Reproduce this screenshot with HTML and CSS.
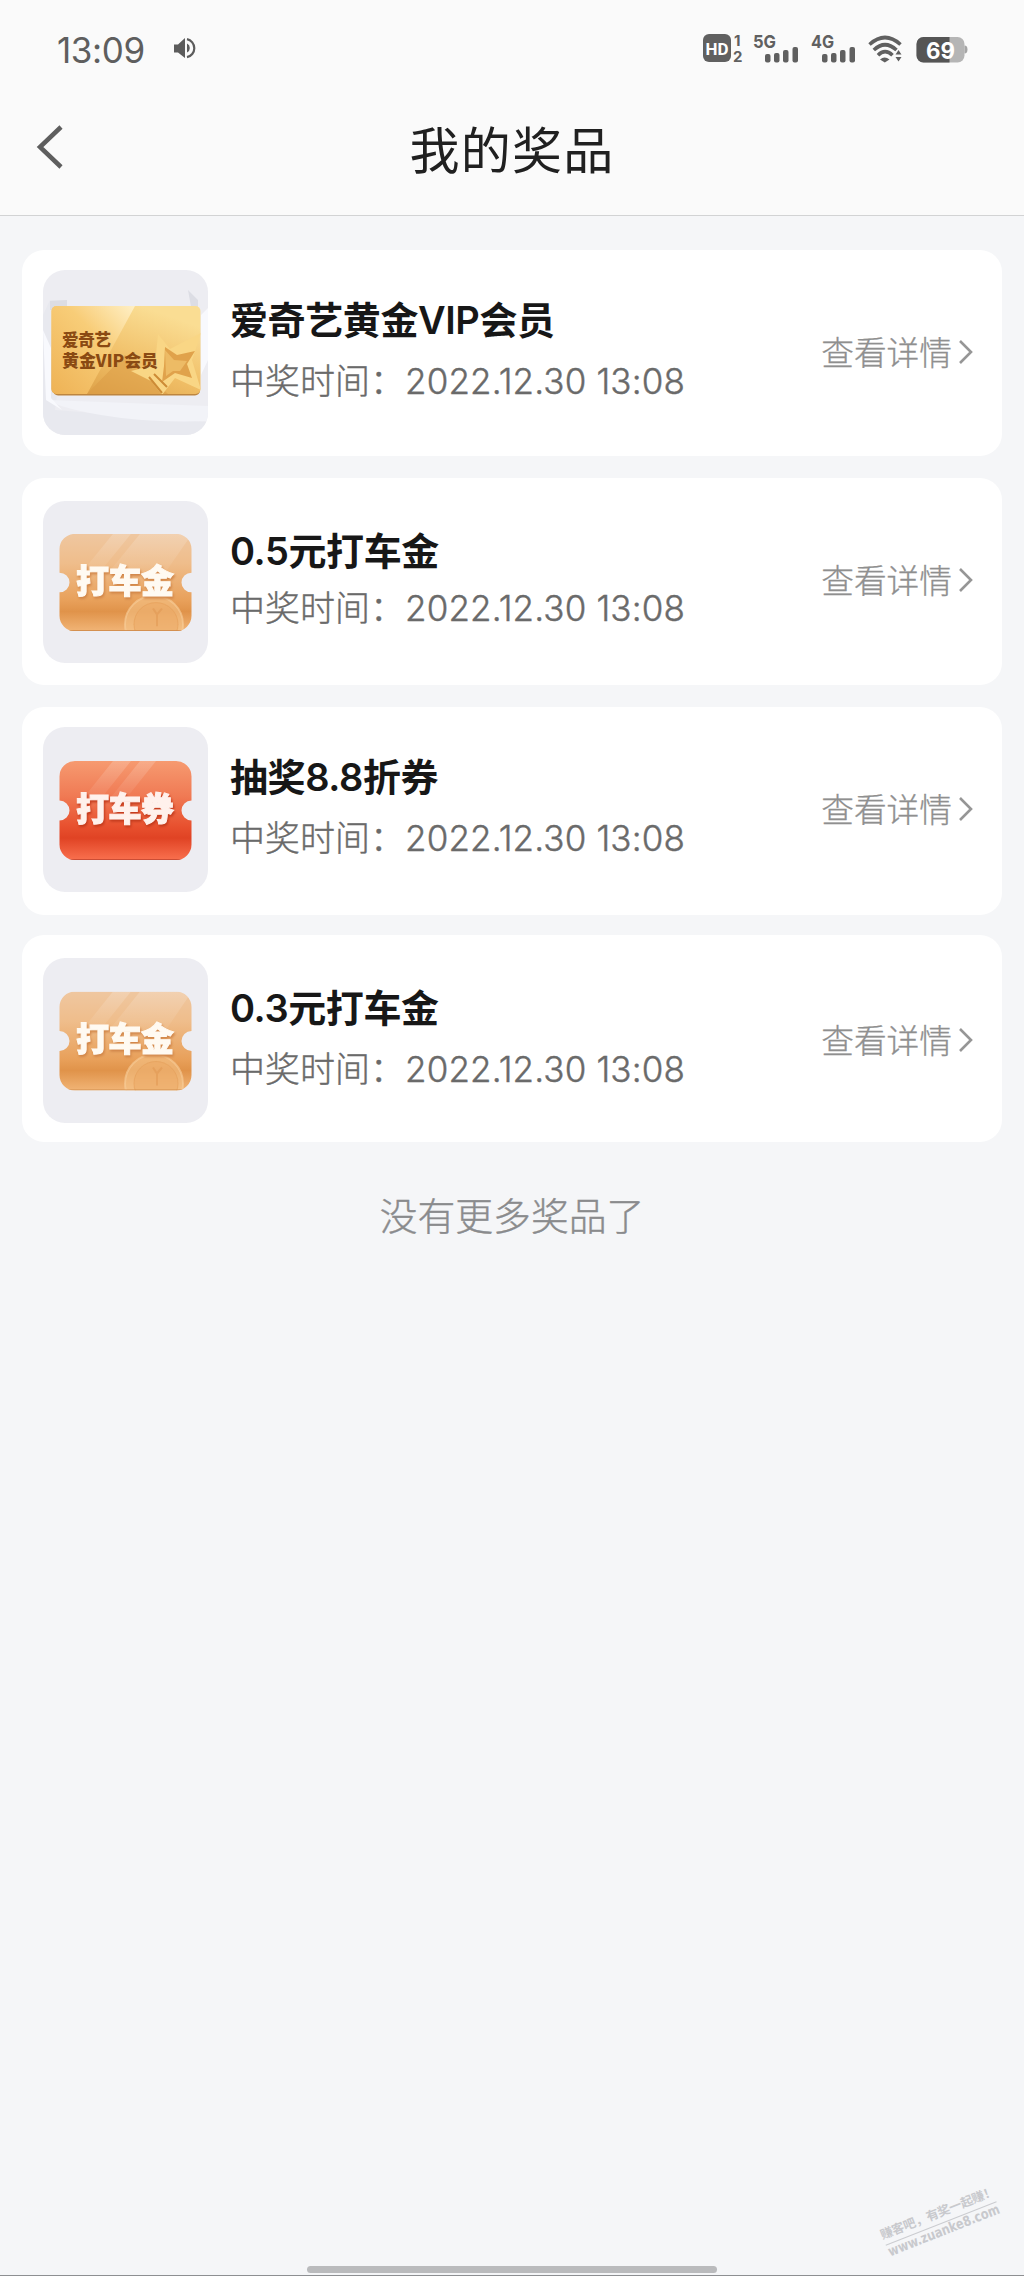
FILE: index.html
```html
<!DOCTYPE html>
<html lang="zh-CN">
<head>
<meta charset="utf-8">
<title>我的奖品</title>
<link rel="stylesheet" href="styles.css">
</head>
<body>
<svg class="defs" width="0" height="0" aria-hidden="true">
  <defs>
    <linearGradient id="gold" x1="0" y1="0" x2="1" y2="1">
      <stop offset="0" stop-color="#f7cc74"/><stop offset=".45" stop-color="#fadb91"/><stop offset="1" stop-color="#e5a548"/>
    </linearGradient>
    <linearGradient id="goldLeft" x1="0" y1="1" x2="1" y2="0">
      <stop offset="0" stop-color="#eeb255"/><stop offset=".6" stop-color="#f8cd78"/><stop offset="1" stop-color="#fff0c6"/>
    </linearGradient>
    <linearGradient id="goldRight" x1="0" y1="1" x2=".6" y2="0">
      <stop offset="0" stop-color="#d99a40"/><stop offset=".5" stop-color="#f0be66"/><stop offset="1" stop-color="#fadd93"/>
    </linearGradient>
    <linearGradient id="orange" x1="0" y1="0" x2="0" y2="1">
      <stop offset="0" stop-color="#efc7a0"/><stop offset=".3" stop-color="#efbd8b"/><stop offset=".68" stop-color="#e8a05a"/><stop offset=".79" stop-color="#e0934a"/><stop offset="1" stop-color="#f2b678"/>
    </linearGradient>
    <linearGradient id="red" x1="0" y1="0" x2="0" y2="1">
      <stop offset="0" stop-color="#f69a70"/><stop offset=".35" stop-color="#f07a54"/><stop offset=".65" stop-color="#e8512f"/><stop offset=".77" stop-color="#e04324"/><stop offset="1" stop-color="#fa7250"/>
    </linearGradient>
    <linearGradient id="shine" x1="0" y1="0" x2="0" y2="1">
      <stop offset="0" stop-color="#fff" stop-opacity=".18"/><stop offset="1" stop-color="#fff" stop-opacity="0"/>
    </linearGradient>
    <clipPath id="ticketClip"><path d="M32 32H133a15.500 15.500 0 0 1 15.500 15.500V71.500a10 10 0 0 0 0 20V115.500a15.500 15.500 0 0 1-15.500 15.500H32A15.500 15.500 0 0 1 16.500 115.500V91.500a10 10 0 0 0 0-20V47.500A15.500 15.500 0 0 1 32 32Z"/></clipPath>
    <clipPath id="goldClip"><rect x="8.500" y="36" width="149" height="88" rx="5"/></clipPath>
    <g id="coin">
      <circle cx="111" cy="124" r="29" fill="#f6c68c" fill-opacity=".55" stroke="#f8cf9b" stroke-opacity=".6" stroke-width="2"/>
      <circle cx="113" cy="124" r="22" fill="#eaa761" fill-opacity=".45" stroke="#e6a15c" stroke-opacity=".7"/>
      <path d="M110 108l4 6 5-6M114 114v12" fill="none" stroke="#df9650" stroke-opacity=".5" stroke-width="2"/>
    </g>
  </defs>
</svg>

<header class="header">
  <div class="status">
    <div class="status-left">
      <span class="clock">13:09</span>
      <svg class="speaker" width="24" height="24" viewBox="0 0 24 24"><path d="M1 7.500H5L12 1V21L5 15.500H1Z" fill="#5c5c5c"/><path d="M14 6.500a5 5 0 0 1 0 9Z" fill="#5c5c5c"/><path d="M14 2.200a9.200 9.200 0 0 1 0 18" fill="none" stroke="#5c5c5c" stroke-width="2.200"/></svg>
    </div>
    <svg class="indicators" width="270" height="36" viewBox="0 0 270 36">
      <g fill="#606060">
        <rect x="3" y="4" width="28" height="28" rx="6"/>
        <text class="hd" x="5.500" y="24.500" textLength="23" lengthAdjust="spacingAndGlyphs">HD</text>
        <text class="sim" x="34" y="15.500">1</text>
        <text class="sim" x="33" y="31.500">2</text>
        <text class="net" x="53" y="18" textLength="23" lengthAdjust="spacingAndGlyphs">5G</text>
        <g id="bars"><rect x="65" y="24" width="5.500" height="8.500" rx="2"/><rect x="74" y="23" width="5.500" height="9.500" rx="2"/><rect x="83" y="20" width="5.500" height="12.500" rx="2"/><rect x="92.500" y="17" width="5.500" height="15.500" rx="2"/></g>
        <text class="net" x="111" y="18" textLength="23" lengthAdjust="spacingAndGlyphs">4G</text>
        <use href="#bars" x="57"/>
        <path d="M180 29.500Q184.500 25.500 189.500 29.500L184.800 32.500Z"/>
        <path d="M198.500 20l3 4.500h-6ZM198.500 31.500l3-4.500h-6Z"/>
      </g>
      <g fill="none" stroke="#606060" stroke-width="3.600">
        <path d="M169.500 14.500Q185 0.500 200.500 14.500"/><path d="M173.800 20Q185 9.500 196.500 20"/><path d="M178 25.300Q185 18 192.500 25.300"/>
      </g>
      <rect x="216.500" y="7" width="48" height="25.500" rx="7" fill="#b5b5b5"/>
      <path d="M223.500 7H249.500V32.500H223.500a7 7 0 0 1-7-7V14a7 7 0 0 1 7-7Z" fill="#555"/>
      <path d="M264.500 15.500q3 0 3 4t-3 4Z" fill="#a5a5a5"/>
      <text class="battery" x="226" y="28.500" textLength="29" lengthAdjust="spacingAndGlyphs">69</text>
    </svg>
  </div>
  <div class="nav">
    <svg class="back" width="30" height="46" viewBox="0 0 30 46"><path d="M25 3L4 23L25 43" fill="none" stroke="#5e5e5e" stroke-width="4.500"/></svg>
    <h1 class="page-title">我的奖品</h1>
  </div>
</header>

<main class="prizes">
  <article class="card card-vip">
    <svg class="thumb" viewBox="0 0 165 165">
      <rect width="165" height="165" fill="#ededf2"/>
      <path d="M0 45L7 30H24V48L12 140L165 152V165H0Z" fill="#e8e9ef"/>
      <path d="M5 130L165 136V151Q80 154 18 136Z" fill="#f2f3f8"/>
      <path d="M145 20L155 30V48H150ZM7 31L24 30V40H7Z" fill="#dcdde4"/>
      <path d="M158 45L165 38V90L158 105ZM0 60L8 78V128L19 140L3 130Z" fill="#f8f9fd"/>
      <rect x="10" y="38" width="147" height="87.500" rx="5" fill="#bd853f"/>
      <g clip-path="url(#goldClip)">
        <rect x="8" y="36" width="150" height="89" fill="url(#goldRight)"/>
        <path d="M92 36L44 124H8V36Z" fill="url(#goldLeft)"/>
        <path d="M44 124L82 85L125 124Z" fill="#d99a43" fill-opacity=".5"/>
        <path d="M115 64L127 79L158 63L149 90L158 120L132 108L119 125L108 111L88 101L112 95Z" fill="#f9d685"/>
        <path d="M122 77L134 85L152 81L144 94L149 108L132 103L119 112L121 96Z" fill="#e0a24b"/>
        <path d="M122 80L131 90L144 91L137 101L130 101L123 106Z" fill="#edbb65"/>
        <path d="M106 107L119 123M111 104L124 117" stroke="#cd8b36" stroke-width="2"/>
      </g>
      <text class="vip-text" x="19" y="75.500" textLength="49">爱奇艺</text>
      <text class="vip-text" x="19" y="96.500" textLength="96" lengthAdjust="spacingAndGlyphs">黄金VIP会员</text>
    </svg>
    <div class="info">
      <h2 class="name">爱奇艺黄金VIP会员</h2>
      <p class="time">中奖时间：<span class="date">2022.12.30 13:08</span></p>
    </div>
    <a class="more">查看详情<svg class="arrow" width="16" height="28" viewBox="0 0 16 28"><path d="M2 3L13 14L2 25" fill="none" stroke="#969696" stroke-width="2.600"/></svg></a>
  </article>

  <article class="card card-cash">
    <svg class="thumb thumb-cash" viewBox="0 0 165 165" preserveAspectRatio="none">
      <rect width="165" height="165" fill="#ededf2"/>
      <g transform="translate(0 1.500)">
        <g clip-path="url(#ticketClip)">
          <rect x="16" y="32" width="133" height="100" fill="url(#orange)"/>
          <path d="M70 32H88L48 82H30ZM97 32H149L115 82H57Z" fill="url(#shine)"/>
          <use href="#coin"/>
          <path d="M16 130.500H149" stroke="#d08c4d"/>
        </g>
        <text class="ticket-text ticket-text-cash" x="33" y="92" textLength="98">打车金</text>
      </g>
    </svg>
    <div class="info">
      <h2 class="name">0.5元打车金</h2>
      <p class="time">中奖时间：<span class="date">2022.12.30 13:08</span></p>
    </div>
    <a class="more">查看详情<svg class="arrow" width="16" height="28" viewBox="0 0 16 28"><path d="M2 3L13 14L2 25" fill="none" stroke="#969696" stroke-width="2.600"/></svg></a>
  </article>

  <article class="card card-coupon">
    <svg class="thumb" viewBox="0 0 165 165">
      <rect width="165" height="165" fill="#ededf2"/>
      <g transform="translate(0 2)">
        <g clip-path="url(#ticketClip)">
          <rect x="16" y="32" width="133" height="100" fill="url(#red)"/>
          <path d="M70 32H88L48 82H30ZM97 32H113L73 82H57Z" fill="url(#shine)"/>
          <path d="M16 130.500H149" stroke="#cb4d35"/>
        </g>
        <text class="ticket-text ticket-text-coupon" x="33" y="91.500" textLength="98">打车券</text>
      </g>
    </svg>
    <div class="info">
      <h2 class="name">抽奖8.8折券</h2>
      <p class="time">中奖时间：<span class="date">2022.12.30 13:08</span></p>
    </div>
    <a class="more">查看详情<svg class="arrow" width="16" height="28" viewBox="0 0 16 28"><path d="M2 3L13 14L2 25" fill="none" stroke="#969696" stroke-width="2.600"/></svg></a>
  </article>

  <article class="card card-cash-small">
    <svg class="thumb" viewBox="0 0 165 165">
      <rect width="165" height="165" fill="#ededf2"/>
      <g transform="translate(0 1.500)">
        <g clip-path="url(#ticketClip)">
          <rect x="16" y="32" width="133" height="100" fill="url(#orange)"/>
          <path d="M70 32H88L48 82H30ZM97 32H149L115 82H57Z" fill="url(#shine)"/>
          <use href="#coin"/>
          <path d="M16 130.500H149" stroke="#d08c4d"/>
        </g>
        <text class="ticket-text ticket-text-cash" x="33" y="91.500" textLength="98">打车金</text>
      </g>
    </svg>
    <div class="info">
      <h2 class="name">0.3元打车金</h2>
      <p class="time">中奖时间：<span class="date">2022.12.30 13:08</span></p>
    </div>
    <a class="more">查看详情<svg class="arrow" width="16" height="28" viewBox="0 0 16 28"><path d="M2 3L13 14L2 25" fill="none" stroke="#969696" stroke-width="2.600"/></svg></a>
  </article>

  <p class="end">没有更多奖品了</p>
</main>

<footer class="home-bar"><span class="home-handle"></span></footer>
<svg class="watermark" width="184" height="106" viewBox="0 0 184 106">
  <g transform="translate(43 71) rotate(-21.500)" fill="#c8c9cd">
    <text class="wm-cn" x="0" y="-1.500" textLength="123">赚客吧，有奖一起赚！</text>
    <path d="M1 5H120" stroke="#cbccd0"/>
    <text class="wm-url" x="1" y="17" textLength="119" lengthAdjust="spacingAndGlyphs">www.zuanke8.com</text>
  </g>
</svg>
</body>
</html>
```
FILE: styles.css
```css
* { box-sizing: border-box; }
body {
  margin: 0;
  height: 2276px;
  display: flex;
  flex-direction: column;
  background: #f5f6f8;
  font-family: "Noto Sans CJK SC", sans-serif;
  position: relative;
}
h1, h2, p { margin: 0; }
.defs { position: absolute; }

.header {
  height: 216px;
  background: #fafafa;
  border-bottom: 1px solid #d2d3d4;
}
.status {
  height: 100px;
  padding: 0 54px 0 57px;
  display: flex;
  justify-content: space-between;
}
.status-left { display: flex; padding-top: 29px; }
.clock {
  width: 116px;
  font: 400 35px/42px Inter, sans-serif;
  letter-spacing: -0.4px;
  color: #5e5e5e;
}
.speaker { margin-top: 8px; }
.indicators { margin-top: 30px; }
.hd { font: 700 16px Roboto, sans-serif; fill: #fff; }
.sim { font: 700 15px Inter, sans-serif; }
.net { font: 700 18px Inter, sans-serif; }
.battery { font: 700 23px Inter, sans-serif; fill: #fff; }

.nav {
  height: 115px;
  display: grid;
  grid-template-columns: 80px 1fr 80px;
}
.back { margin: 24px 0 0 36px; }
.page-title {
  font-size: 50px;
  font-weight: 400;
  line-height: 94px;
  letter-spacing: 1.2px;
  text-align: center;
  color: #202020;
}

.prizes { padding: 34px 22px 0; flex: 1; }
.card {
  display: flex;
  padding: 0 28px 0 21px;
  border-radius: 22px;
  background: #fff;
  margin-bottom: 22px;
}
.card-vip { height: 206px; padding-top: 20px; }
.card-cash { height: 207px; padding-top: 23px; }
.card-coupon { height: 208px; padding-top: 20px; margin-bottom: 20px; }
.card-cash-small { height: 207px; padding-top: 23px; }
.thumb {
  width: 165px;
  height: 165px;
  border-radius: 22px;
  flex: none;
}
.thumb-cash { height: 162px; }
.info { margin-left: 22px; flex: 1; padding-top: 22px; }
.name {
  font-family: Inter, "Noto Sans CJK SC", sans-serif;
  font-size: 38px;
  font-weight: 600;
  line-height: 56px;
  letter-spacing: -0.4px;
  color: #171717;
}
.time {
  font-size: 35px;
  font-weight: 300;
  line-height: 52px;
  margin-top: 5px;
  color: #6a6a6a;
  white-space: nowrap;
  -webkit-text-stroke: 0.4px #6a6a6a;
}
.card-cash .time { margin-top: 1px; }
.date { font-family: Inter, sans-serif; font-weight: 300; letter-spacing: 0.15px; }
.more {
  display: flex;
  align-items: center;
  align-self: flex-start;
  margin-top: 56px;
  font-size: 32.7px;
  font-weight: 300;
  line-height: 50px;
  color: #8f8f8f;
  -webkit-text-stroke: 0.3px #8f8f8f;
}
.card-cash .more { margin-top: 53px; }
.arrow { margin: 2px 0 0 6px; }

.vip-text { font-size: 16.5px; font-weight: 900; fill: #8a4a13; }
.ticket-text {
  font-size: 33px;
  font-weight: 900;
  fill: #fffaf2;
  stroke: #fffaf2;
  stroke-width: 1px;
}
.ticket-text-cash { filter: drop-shadow(1px 2px 1px #d08548); }
.ticket-text-coupon { fill: #fff1ec; stroke: #fff1ec; filter: drop-shadow(1px 2px 1px #c23a1c); }

.end {
  margin-top: 44px;
  font-size: 37.8px;
  line-height: 56px;
  text-align: center;
  font-weight: 300;
  color: #8a8b8d;
  -webkit-text-stroke: 0.4px #8a8b8d;
}
.home-bar {
  height: 10px;
  display: flex;
  justify-content: center;
  border-bottom: 1px solid #8d8f92;
}
.home-handle { width: 410px; height: 7px; border-radius: 4px; background: #babbbd; }
.watermark { position: absolute; right: 0; bottom: 0; overflow: visible; }
.wm-cn { font-size: 12.5px; font-weight: 700; }
.wm-url { font: 700 14px "DejaVu Sans", sans-serif; }
```
